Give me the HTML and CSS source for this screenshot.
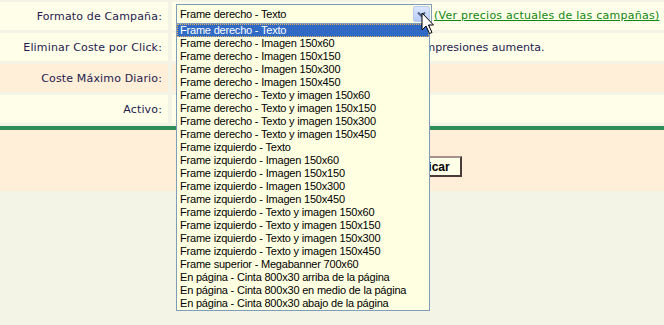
FILE: index.html
```html
<!DOCTYPE html>
<html>
<head>
  <title>Campaña</title>
  <link rel="stylesheet" href="styles.css">
</head>
<body>

<div class="form">
  <div class="row cream">
    <div class="label">Formato de Campaña:</div>
    <div class="field">
      <div class="combo">
        <div class="combo-box">
          <span>Frame derecho - Texto</span>
          <span class="combo-btn">
            <svg width="9" height="7" viewBox="0 0 9 7"><path d="M1 1.5 L4.5 5 L8 1.5" fill="none" stroke="#4d6185" stroke-width="2"/></svg>
          </span>
        </div>
        <ul class="combo-list">
          <li class="selected">Frame derecho - Texto</li>
          <li>Frame derecho - Imagen 150x60</li>
          <li>Frame derecho - Imagen 150x150</li>
          <li>Frame derecho - Imagen 150x300</li>
          <li>Frame derecho - Imagen 150x450</li>
          <li>Frame derecho - Texto y imagen 150x60</li>
          <li>Frame derecho - Texto y imagen 150x150</li>
          <li>Frame derecho - Texto y imagen 150x300</li>
          <li>Frame derecho - Texto y imagen 150x450</li>
          <li>Frame izquierdo - Texto</li>
          <li>Frame izquierdo - Imagen 150x60</li>
          <li>Frame izquierdo - Imagen 150x150</li>
          <li>Frame izquierdo - Imagen 150x300</li>
          <li>Frame izquierdo - Imagen 150x450</li>
          <li>Frame izquierdo - Texto y imagen 150x60</li>
          <li>Frame izquierdo - Texto y imagen 150x150</li>
          <li>Frame izquierdo - Texto y imagen 150x300</li>
          <li>Frame izquierdo - Texto y imagen 150x450</li>
          <li>Frame superior - Megabanner 700x60</li>
          <li>En página - Cinta 800x30 arriba de la página</li>
          <li>En página - Cinta 800x30 en medio de la página</li>
          <li>En página - Cinta 800x30 abajo de la página</li>
        </ul>
        <svg class="cursor" width="14" height="24" viewBox="0 0 14 24">
          <path d="M1 1 L1 18 L5 14 L8.5 21.5 L11 20.5 L7.5 13 L12.5 13 Z" fill="#fff" stroke="#000" stroke-width="1" stroke-linejoin="miter"/>
        </svg>
      </div>
      <a class="prices" href="#">(Ver precios actuales de las campañas)</a>
    </div>
  </div>

  <div class="row cream">
    <div class="label">Eliminar Coste por Click:</div>
    <div class="field">
      <input type="checkbox" class="check">
      <span class="note">Si marca esta opción, el número de sus impresiones aumenta.</span>
    </div>
  </div>

  <div class="row peach">
    <div class="label">Coste Máximo Diario:</div>
    <div class="field">
      <input type="text" class="amount" value="10">
    </div>
  </div>

  <div class="row cream">
    <div class="label">Activo:</div>
    <div class="field">
      <input type="checkbox" class="check" checked>
    </div>
  </div>
</div>

<div class="rule"></div>

<div class="actions">
  <div></div>
  <div class="action-cell">
    <button class="submit">Modificar</button>
  </div>
</div>

</body>
</html>
```

FILE: styles.css
```css
* {
  margin: 0;
  padding: 0;
  box-sizing: border-box;
}

body {
  background-color: #f3f3e6;
  font-family: "DejaVu Sans", Verdana, sans-serif;
  font-size: 11px;
  color: #241a4e;
  min-height: 325px;
}

.form {
  display: flex;
  flex-direction: column;
  gap: 3px;
  padding-top: 2px;
}

.row {
  display: grid;
  grid-template-columns: 168px 1fr;
  column-gap: 4px;
  height: 28px;
}

.row > div {
  display: flex;
  align-items: center;
}

.cream > div {
  background-color: #fffee9;
}

.peach > div {
  background-color: #ffeed8;
}

.label {
  justify-content: flex-end;
  padding-right: 6px;
  letter-spacing: 0.15px;
}

.field {
  padding-left: 4px;
}

/* combo box (open) */
.combo {
  position: relative;
  width: 256px;
  height: 20px;
  margin-top: -4px;
}

.combo-box {
  height: 20px;
  border: 1px solid #7f9db9;
  background-color: #ffffe1;
  display: flex;
  align-items: center;
  justify-content: space-between;
  padding: 0 1px 0 3px;
  font-family: "Liberation Sans", Arial, sans-serif;
  letter-spacing: -0.2px;
  color: #000;
}

.combo-btn {
  width: 17px;
  height: 16px;
  border: 1px solid #b9cbf3;
  border-radius: 2px;
  background: linear-gradient(#dce7fd, #b6cbf7);
  display: flex;
  align-items: center;
  justify-content: center;
}

.combo-list {
  position: absolute;
  top: 19px;
  left: 0;
  width: 254px;
  list-style: none;
  border: 1px solid #7f9db9;
  background-color: #ffffe1;
  font-family: "Liberation Sans", Arial, sans-serif;
  letter-spacing: -0.2px;
  color: #000;
  z-index: 2;
}

.combo-list li {
  height: 13px;
  line-height: 13px;
  padding-left: 3px;
  white-space: nowrap;
}

.combo-list li.selected {
  background-color: #316ac5;
  color: #fff;
  outline: 1px dotted #e8b45a;
  outline-offset: -1px;
}

.cursor {
  position: absolute;
  left: 245px;
  top: 8px;
  z-index: 3;
}

.prices {
  margin-left: 2px;
  margin-top: -1px;
  color: #118811;
  white-space: nowrap;
  letter-spacing: 0.25px;
}

.check {
  width: 13px;
  height: 13px;
  margin-right: 12px;
}

.note {
  white-space: nowrap;
}

.amount {
  width: 60px;
  height: 18px;
  font-size: 11px;
}

.rule {
  margin-top: 3px;
  height: 4px;
  background-color: #2d8c57;
}

.actions {
  display: grid;
  grid-template-columns: 168px 1fr;
  column-gap: 4px;
  height: 61px;
  background-color: #ffeed8;
}

.action-cell {
  display: flex;
  justify-content: center;
  padding-top: 26px;
  padding-left: 10px;
}

.submit {
  height: 21px;
  padding: 0 10px;
  font-family: "Liberation Sans", Arial, sans-serif;
  font-weight: bold;
  font-size: 12px;
  color: #000;
  background-color: #fffee6;
  border: 2px solid;
  border-color: #a89090 #4a3a3a #4a3a3a #a89090;
}
```
